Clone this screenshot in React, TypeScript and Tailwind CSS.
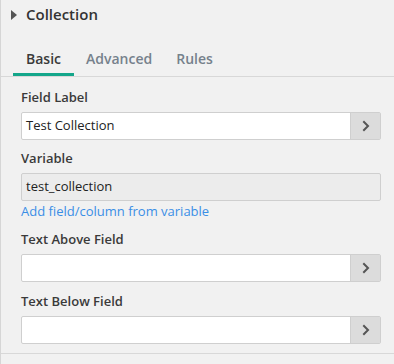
const Chevron = () => (
  <svg width="8" height="12" viewBox="0 0 8 12" fill="none">
    <path d="M2 2l4 4-4 4" stroke="#555" strokeWidth="2" strokeLinecap="square" />
  </svg>
);

const TextField = ({ value }: { value?: string }) => (
  <div className="flex h-[28px] w-[360px] rounded-[2px] border border-[#cfcfcf] bg-white">
    <div className="flex flex-1 items-center px-[4px] text-[13px] text-[#222]">{value}</div>
    <button className="flex w-[30px] items-center justify-center border-l border-[#cfcfcf] bg-[#dcdcdc]">
      <Chevron />
    </button>
  </div>
);

const Label = ({ children }: { children: string }) => (
  <div className="mb-[5px] h-[20px] text-[13px] leading-[20px] font-semibold text-[#3a3a3a]">{children}</div>
);

export default function App() {
  return (
    <div className="h-[364px] w-[394px] border-l border-[#d6d6d6] bg-[#f1f1f1] font-['Open_Sans',sans-serif]">
      {/* Header */}
      <div className="flex h-[30px] items-center pb-[1px]">
        <svg className="ml-[10px]" width="6" height="10" viewBox="0 0 6 10">
          <path d="M0 0l6 5-6 5z" fill="#555" />
        </svg>
        <span className="ml-[9px] text-[15px] font-semibold text-[#333]">Collection</span>
      </div>

      {/* Tabs */}
      <div className="mt-[19px] flex border-b border-[#d8d8d8] pl-[12px]">
        <div className="border-b-[3px] border-[#14a68a] px-[13px] pb-[4px] text-[14px] leading-[20px] font-semibold text-[#3a3a3a]">
          Basic
        </div>
        <div className="border-b-[3px] border-transparent px-[12px] pb-[4px] text-[14px] leading-[20px] font-semibold text-[#76818c]">
          Advanced
        </div>
        <div className="border-b-[3px] border-transparent px-[12px] pb-[4px] text-[14px] leading-[20px] font-semibold text-[#76818c]">
          Rules
        </div>
      </div>

      {/* Form */}
      <div className="px-[20px] pt-[10px]">
        <Label>Field Label</Label>
        <TextField value="Test Collection" />

        <div className="mt-[8px]">
          <Label>Variable</Label>
          <div className="flex h-[28px] w-[360px] items-center rounded-[2px] border border-[#cfcfcf] bg-[#ececec] px-[4px] text-[13px] text-[#222]">
            test_collection
          </div>
          <div className="mt-[2px] h-[16px] text-[13px] leading-[16px] text-[#3a8ee6]">Add field/column from variable</div>
        </div>

        <div className="mt-[10px]">
          <Label>Text Above Field</Label>
          <TextField />
        </div>

        <div className="mt-[9px]">
          <Label>Text Below Field</Label>
          <TextField />
        </div>
      </div>

      <div className="mt-[9px] border-b border-[#d8d8d8]" />
    </div>
  );
}
